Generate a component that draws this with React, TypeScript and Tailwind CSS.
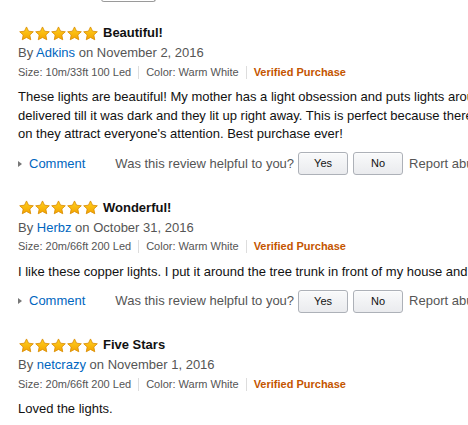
import React from "react";

const Star = () => (
  <svg width="15" height="15" viewBox="0 0 24 23" className="block">
    <defs>
      <linearGradient id="sg" x1="0" y1="0" x2="0" y2="1">
        <stop offset="0" stopColor="#ffd21f" />
        <stop offset="1" stopColor="#f4a300" />
      </linearGradient>
    </defs>
    <path
      d="M12 1l3.3 6.8 7.6.9-5.6 5.2 1.5 7.6L12 17.8l-6.8 3.7 1.5-7.6L1.1 8.7l7.6-.9z"
      fill="url(#sg)"
      stroke="#d98b00"
      strokeWidth="1.3"
      strokeLinejoin="round"
    />
  </svg>
);

const Sep = () => <span className="mx-[7px] inline-block h-[13px] w-px bg-[#ddd]" />;

type R = {
  title: string;
  author: string;
  date: string;
  size: string;
  body: string[];
  actions: boolean;
};

const reviews: R[] = [
  {
    title: "Beautiful!",
    author: "Adkins",
    date: "November 2, 2016",
    size: "10m/33ft 100 Led",
    body: [
      "These lights are beautiful! My mother has a light obsession and puts lights around everything in her house.",
      "delivered till it was dark and they lit up right away. This is perfect because there are so many of them and once",
      "on they attract everyone's attention. Best purchase ever!",
    ],
    actions: true,
  },
  {
    title: "Wonderful!",
    author: "Herbz",
    date: "October 31, 2016",
    size: "20m/66ft 200 Led",
    body: [
      "I like these copper lights. I put it around the tree trunk in front of my house and it looks great at night.",
    ],
    actions: true,
  },
  {
    title: "Five Stars",
    author: "netcrazy",
    date: "November 1, 2016",
    size: "20m/66ft 200 Led",
    body: ["Loved the lights."],
    actions: false,
  },
];

const Btn = ({ label }: { label: string }) => (
  <button className="h-[23px] w-[50px] rounded-[3px] border border-[#adb1b8] bg-gradient-to-b from-[#f9fafb] to-[#eaebee] text-[11px] leading-none text-[#111] shadow-[inset_0_1px_0_rgba(255,255,255,0.6)]">
    {label}
  </button>
);

export default function App() {
  return (
    <div
      className="h-[425px] w-[468px] overflow-hidden bg-white"
      style={{ fontFamily: '"Liberation Sans", Arial, sans-serif' }}
    >
      <div className="ml-[101px] h-[3px] w-[55px] -mt-px rounded-b-[3px] border-x border-b border-[#9a9a9a]" />
      <div className="pt-[21px]">
        {reviews.map((r, i) => (
          <div key={i} className={i > 0 ? "mt-[22px]" : ""}>
            <div className="flex h-[20px] items-center pl-[19px]">
              <div className="flex gap-[1px]">
                <Star />
                <Star />
                <Star />
                <Star />
                <Star />
              </div>
              <span className="ml-[5px] text-[13px] font-bold text-[#111]">{r.title}</span>
            </div>
            <div className="h-[20px] pl-[18px] text-[13px] leading-[20px] text-[#555] whitespace-nowrap">
              By <span className="text-[#0066c0]">{r.author}</span> on {r.date}
            </div>
            <div className="flex h-[18px] items-center pl-[18px] text-[11px] text-[#555] whitespace-nowrap">
              <span>Size: {r.size}</span>
              <Sep />
              <span>Color: Warm White</span>
              <Sep />
              <span className="font-bold text-[#c45500]">Verified Purchase</span>
            </div>
            <div className="mt-[7px] pl-[18px] text-[13px] leading-[18.5px] text-[#111] whitespace-nowrap">
              {r.body.map((l, j) => (
                <div key={j}>{l}</div>
              ))}
            </div>
            {r.actions && (
              <div className="mt-[8px] flex h-[24px] items-center pl-[18px] text-[13px] whitespace-nowrap">
                <span className="mr-[7px] inline-block h-0 w-0 border-y-[3.5px] border-l-[4px] border-y-transparent border-l-[#777]" />
                <span className="text-[#0066c0]">Comment</span>
                <span className="mx-[15px] inline-block h-[14px] w-px bg-[#ddd]" />
                <span className="text-[#555]">Was this review helpful to you?</span>
                <div className="ml-[4px] flex gap-[5px]">
                  <Btn label="Yes" />
                  <Btn label="No" />
                </div>
                <span className="ml-[6px] text-[#555]">Report abuse</span>
              </div>
            )}
          </div>
        ))}
      </div>
    </div>
  );
}
